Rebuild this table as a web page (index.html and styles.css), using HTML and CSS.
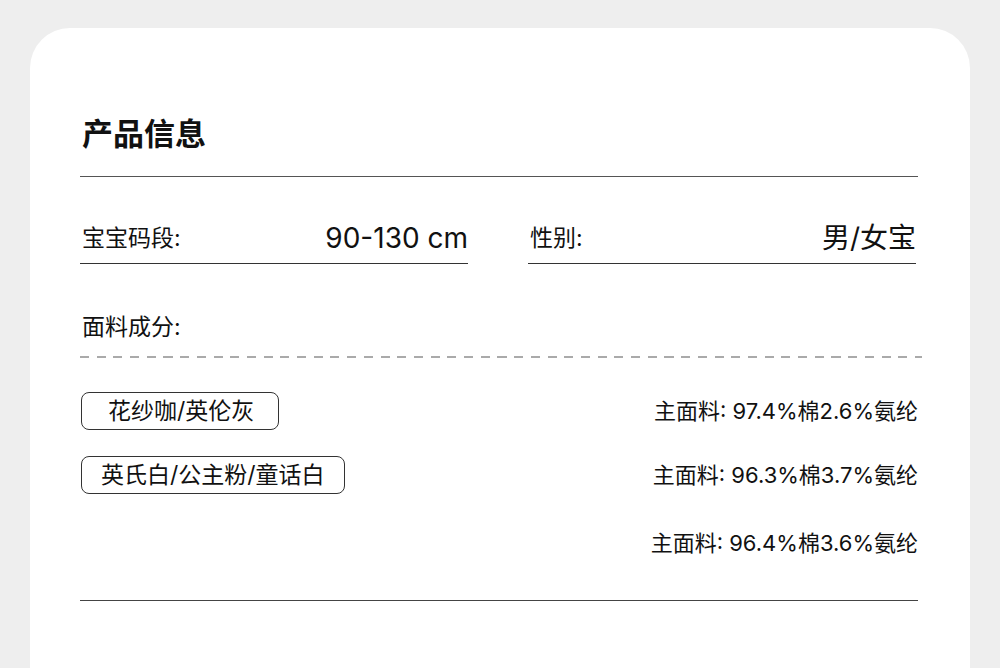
FILE: index.html
```html
<!DOCTYPE html>
<html lang="zh">
<head>
<meta charset="utf-8">
<title>产品信息</title>
<link rel="stylesheet" href="styles.css">
</head>
<body>
<div class="card">
  <h1 class="title">产品信息</h1>
  <div class="fields">
    <div class="field">
      <span class="label">宝宝码段:</span>
      <span class="value">90-130 cm</span>
    </div>
    <div class="field">
      <span class="label">性别:</span>
      <span class="value">男/女宝</span>
    </div>
  </div>
  <div class="section-label">面料成分:</div>
  <div class="dashed"></div>
  <div class="rows">
    <div class="row">
      <span class="pill pill-a">花纱咖/英伦灰</span>
      <span class="comp">主面料: 97.4%棉2.6%氨纶</span>
    </div>
    <div class="row">
      <span class="pill pill-b">英氏白/公主粉/童话白</span>
      <span class="comp">主面料: 96.3%棉3.7%氨纶</span>
    </div>
    <div class="row row-last">
      <span class="comp">主面料: 96.4%棉3.6%氨纶</span>
    </div>
  </div>
  <div class="bottom-line"></div>
</div>
</body>
</html>
```

FILE: styles.css
```css
* { box-sizing: border-box; }
html, body { margin: 0; padding: 0; }
body {
  background: #eeeeee;
  font-family: Inter, "Noto Sans CJK SC", sans-serif;
  color: #111;
  height: 668px;
  overflow: hidden;
  padding: 28px 30px 0;
}
.card {
  background: #fff;
  border-radius: 40px 40px 0 0;
  height: 640px;
  padding: 84px 52px 0 50px;
}
.title {
  margin: 0;
  font-family: "Noto Sans CJK SC", sans-serif;
  font-size: 31px;
  line-height: 40px;
  font-weight: 700;
  padding: 0 0 24px 2px;
  border-bottom: 1px solid #555;
}
.fields {
  display: grid;
  grid-template-columns: 388px 388px;
  column-gap: 60px;
}
.field {
  display: flex;
  justify-content: space-between;
  align-items: center;
  padding: 43px 0 7px 2px;
  line-height: 36px;
  border-bottom: 1px solid #333;
}
.label { font-size: 23px; }
.value { font-size: 28px; }
.section-label {
  margin-top: 48px;
  font-size: 23px;
  line-height: 30px;
  padding-left: 2px;
}
.dashed {
  margin-top: 14px;
  height: 2px;
  width: 842px;
  background: repeating-linear-gradient(90deg, #aaa 0 9px, transparent 9px 16.7px);
}
.rows {
  margin-top: 34px;
  display: flex;
  flex-direction: column;
  gap: 26px;
}
.row {
  display: flex;
  justify-content: space-between;
  align-items: center;
  height: 38px;
}
.row-last { margin-top: 4px; justify-content: flex-end; }
.pill {
  border: 1px solid #333;
  border-radius: 8px;
  height: 38px;
  line-height: 36px;
  font-size: 23px;
  margin-left: 1px;
}
.pill-a { padding: 0 24px 0 26px; }
.pill-b { padding: 0 19px; }
.comp { font-size: 22px; line-height: 30px; }
.bottom-line {
  margin-top: 38px;
  height: 1px;
  background: #444;
}
```
